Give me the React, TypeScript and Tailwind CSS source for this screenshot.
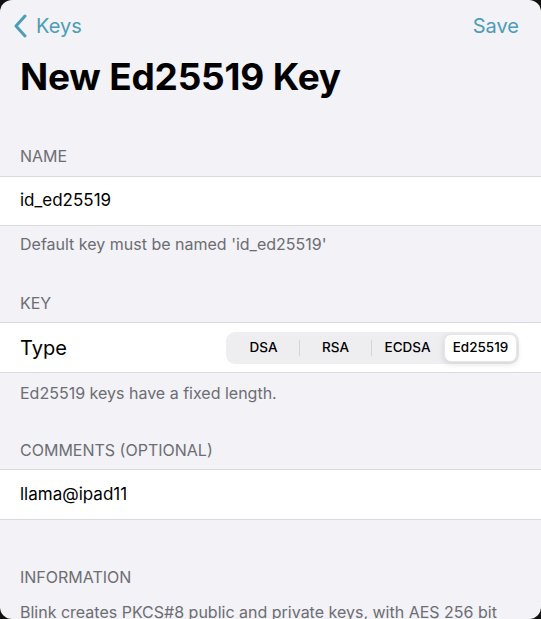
import React from "react";

const font = { fontFamily: "Inter, 'Liberation Sans', sans-serif" };

const segments = ["DSA", "RSA", "ECDSA", "Ed25519"];

function Header({ label, top, bottom }: { label: string; top: string; bottom: string }) {
  return (
    <div className={`${top} ${bottom} px-[20px] text-[16px] leading-[20px] text-[#6d6d72]`}>
      {label}
    </div>
  );
}

function Footer({ text, top }: { text: string; top: string }) {
  return (
    <div className={`${top} px-[20px] text-[16px] leading-[20px] text-[#6d6d72]`}>
      {text}
    </div>
  );
}

export default function App() {
  return (
    <div className="h-[619px] w-[541px] bg-[#111] overflow-hidden" style={font}>
      <div className="h-[619px] bg-[#f2f2f7] rounded-[12px] overflow-hidden">
        {/* Nav bar */}
        <div className="h-[52px] flex items-center justify-between pl-[13px] pr-[22px]">
          <div className="flex items-center gap-[9px] text-[#4c9db5]">
            <svg width="14" height="24" viewBox="0 0 14 24" fill="none">
              <path
                d="M12 2 L3 12 L12 22"
                stroke="#4c9db5"
                strokeWidth="3"
                strokeLinecap="round"
                strokeLinejoin="round"
              />
            </svg>
            <span className="text-[20px] leading-[24px]">Keys</span>
          </div>
          <span className="text-[20px] leading-[24px] text-[#4c9db5]">Save</span>
        </div>

        {/* Title */}
        <h1 className="mt-[3px] pl-[20px] text-[37px] leading-[44px] font-bold text-black tracking-[-0.2px]">
          New Ed25519 Key
        </h1>

        {/* Name */}
        <Header label="NAME" top="mt-[47px]" bottom="mb-[10px]" />
        <div className="h-[50px] bg-white border-y border-[#dadade] flex items-center px-[20px] text-[17px] text-black">
          id_ed25519
        </div>
        <Footer text="Default key must be named 'id_ed25519'" top="pt-[8px]" />

        {/* Key */}
        <Header label="KEY" top="mt-[39px]" bottom="mb-[9px]" />
        <div className="h-[51px] bg-white border-y border-[#dadade] flex items-center justify-between pl-[20px] pr-[22px]">
          <span className="text-[20px] text-black">Type</span>
          <div className="flex items-center h-[32px] w-[293px] rounded-[9px] bg-[#eeeef0] p-[2px]">
            {segments.map((s, i) => {
              const selected = s === "Ed25519";
              const showDivider = i > 0 && !selected && segments[i - 1] !== "Ed25519";
              return (
                <React.Fragment key={s}>
                  {i > 0 && (
                    <div
                      className={`w-px h-[16px] ${showDivider ? "bg-[#d4d4d8]" : "bg-transparent"}`}
                    />
                  )}
                  <div
                    className={`flex-1 h-full flex items-center justify-center text-[13.5px] font-medium text-black ${
                      selected ? "bg-white rounded-[7px] shadow-[0_2px_6px_rgba(0,0,0,0.12)] border border-[#e6e6e8]" : ""
                    }`}
                  >
                    {s}
                  </div>
                </React.Fragment>
              );
            })}
          </div>
        </div>
        <Footer text="Ed25519 keys have a fixed length." top="pt-[10px]" />

        {/* Comments */}
        <Header label="COMMENTS (OPTIONAL)" top="mt-[37px]" bottom="mb-[9px]" />
        <div className="h-[51px] bg-white border-y border-[#dadade] flex items-center px-[20px] text-[17px] text-black">
          llama@ipad11
        </div>

        {/* Information */}
        <Header label="INFORMATION" top="mt-[47px]" bottom="mb-[15px]" />
        <div className="px-[20px] text-[16px] leading-[20px] text-[#6d6d72] whitespace-nowrap">
          Blink creates PKCS#8 public and private keys, with AES 256 bit
        </div>
      </div>
    </div>
  );
}
